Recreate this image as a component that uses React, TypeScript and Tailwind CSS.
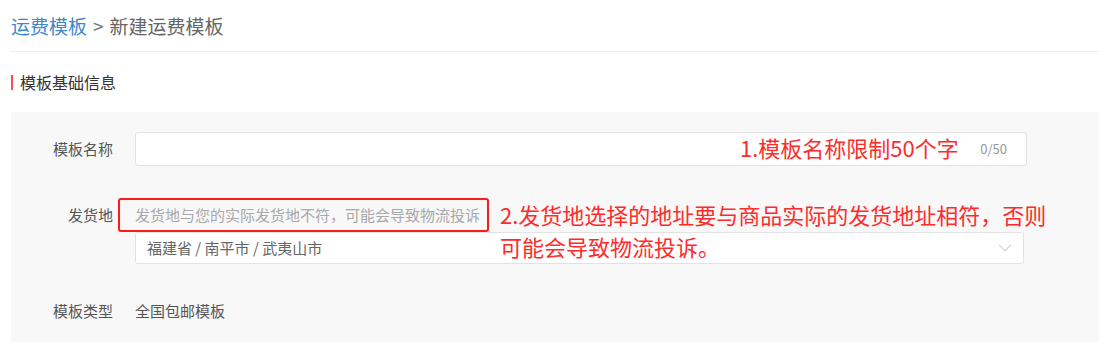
import { ChevronDown } from "lucide-react";

const font = "font-['Noto_Sans_CJK_SC','Noto_Sans',sans-serif]";

function Label({ children }: { children: React.ReactNode }) {
  return (
    <div className="w-[102px] shrink-0 text-right text-[15px] text-[#555]">{children}</div>
  );
}

export default function App() {
  return (
    <div className={`${font} w-[1099px] h-[342px] overflow-hidden bg-white pl-[11px]`}>
      {/* Breadcrumb */}
      <div className="h-[52px] flex items-center border-b border-[#ebebeb] text-[19px] leading-none">
        <span className="text-[#3f88c9]">运费模板</span>
        <span className="text-[#777] mx-[6px]">&gt;</span>
        <span className="text-[#666]">新建运费模板</span>
      </div>

      {/* Section title */}
      <div className="h-[60px] flex items-center">
        <span className="w-[2px] h-[15px] bg-[#ff4d4f]" />
        <span className="ml-[7px] text-[16px] text-[#333]">模板基础信息</span>
      </div>

      {/* Form panel */}
      <div className="bg-[#f8f8f8] h-[240px] pt-[20px]">
        {/* 模板名称 */}
        <div className="flex items-center gap-[22px]">
          <Label>模板名称</Label>
          <div className="relative w-[892px] h-[34px] bg-white border border-[#e2e2e2] rounded-[3px] flex items-center justify-end pr-[19px]">
            <span className="absolute left-[604px] top-[-1px] leading-[30px] text-[22px] text-[#ff2b2b] whitespace-nowrap">
              1.模板名称限制50个字
            </span>
            <span className="text-[13px] text-[#999]">0/50</span>
          </div>
        </div>

        {/* 发货地 */}
        <div className="flex items-start gap-[22px] mt-[35px]">
          <div className="h-[29px] flex items-center">
            <Label>发货地</Label>
          </div>
          <div className="relative">
            <div className="h-[29px] flex items-center">
              <span className="relative text-[15px] text-[#a8a8a8] whitespace-nowrap">
                发货地与您的实际发货地不符，可能会导致物流投诉
                <span className="absolute -left-[17px] -right-[9px] -top-[6px] -bottom-[5px] border-2 border-[#ff1a1a] rounded-[3px]" />
              </span>
            </div>
            <div className="mt-[2px] w-[889px] h-[32px] bg-white border border-[#e2e2e2] rounded-[3px] flex items-center justify-between pl-[11px] pr-[7px]">
              <span className="text-[15px] text-[#666]">福建省 / 南平市 / 武夷山市</span>
              <ChevronDown size={22} strokeWidth={1.1} className="text-[#c4c4c4]" />
            </div>
            <div className="absolute left-[365px] top-[-3px] text-[22px] leading-[32px] text-[#ff2b2b] whitespace-nowrap">
              <div>2.发货地选择的地址要与商品实际的发货地址相符，否则</div>
              <div>可能会导致物流投诉。</div>
            </div>
          </div>
        </div>

        {/* 模板类型 */}
        <div className="flex items-center gap-[22px] mt-[37px] h-[20px]">
          <Label>模板类型</Label>
          <span className="text-[15px] text-[#555]">全国包邮模板</span>
        </div>
      </div>
    </div>
  );
}
